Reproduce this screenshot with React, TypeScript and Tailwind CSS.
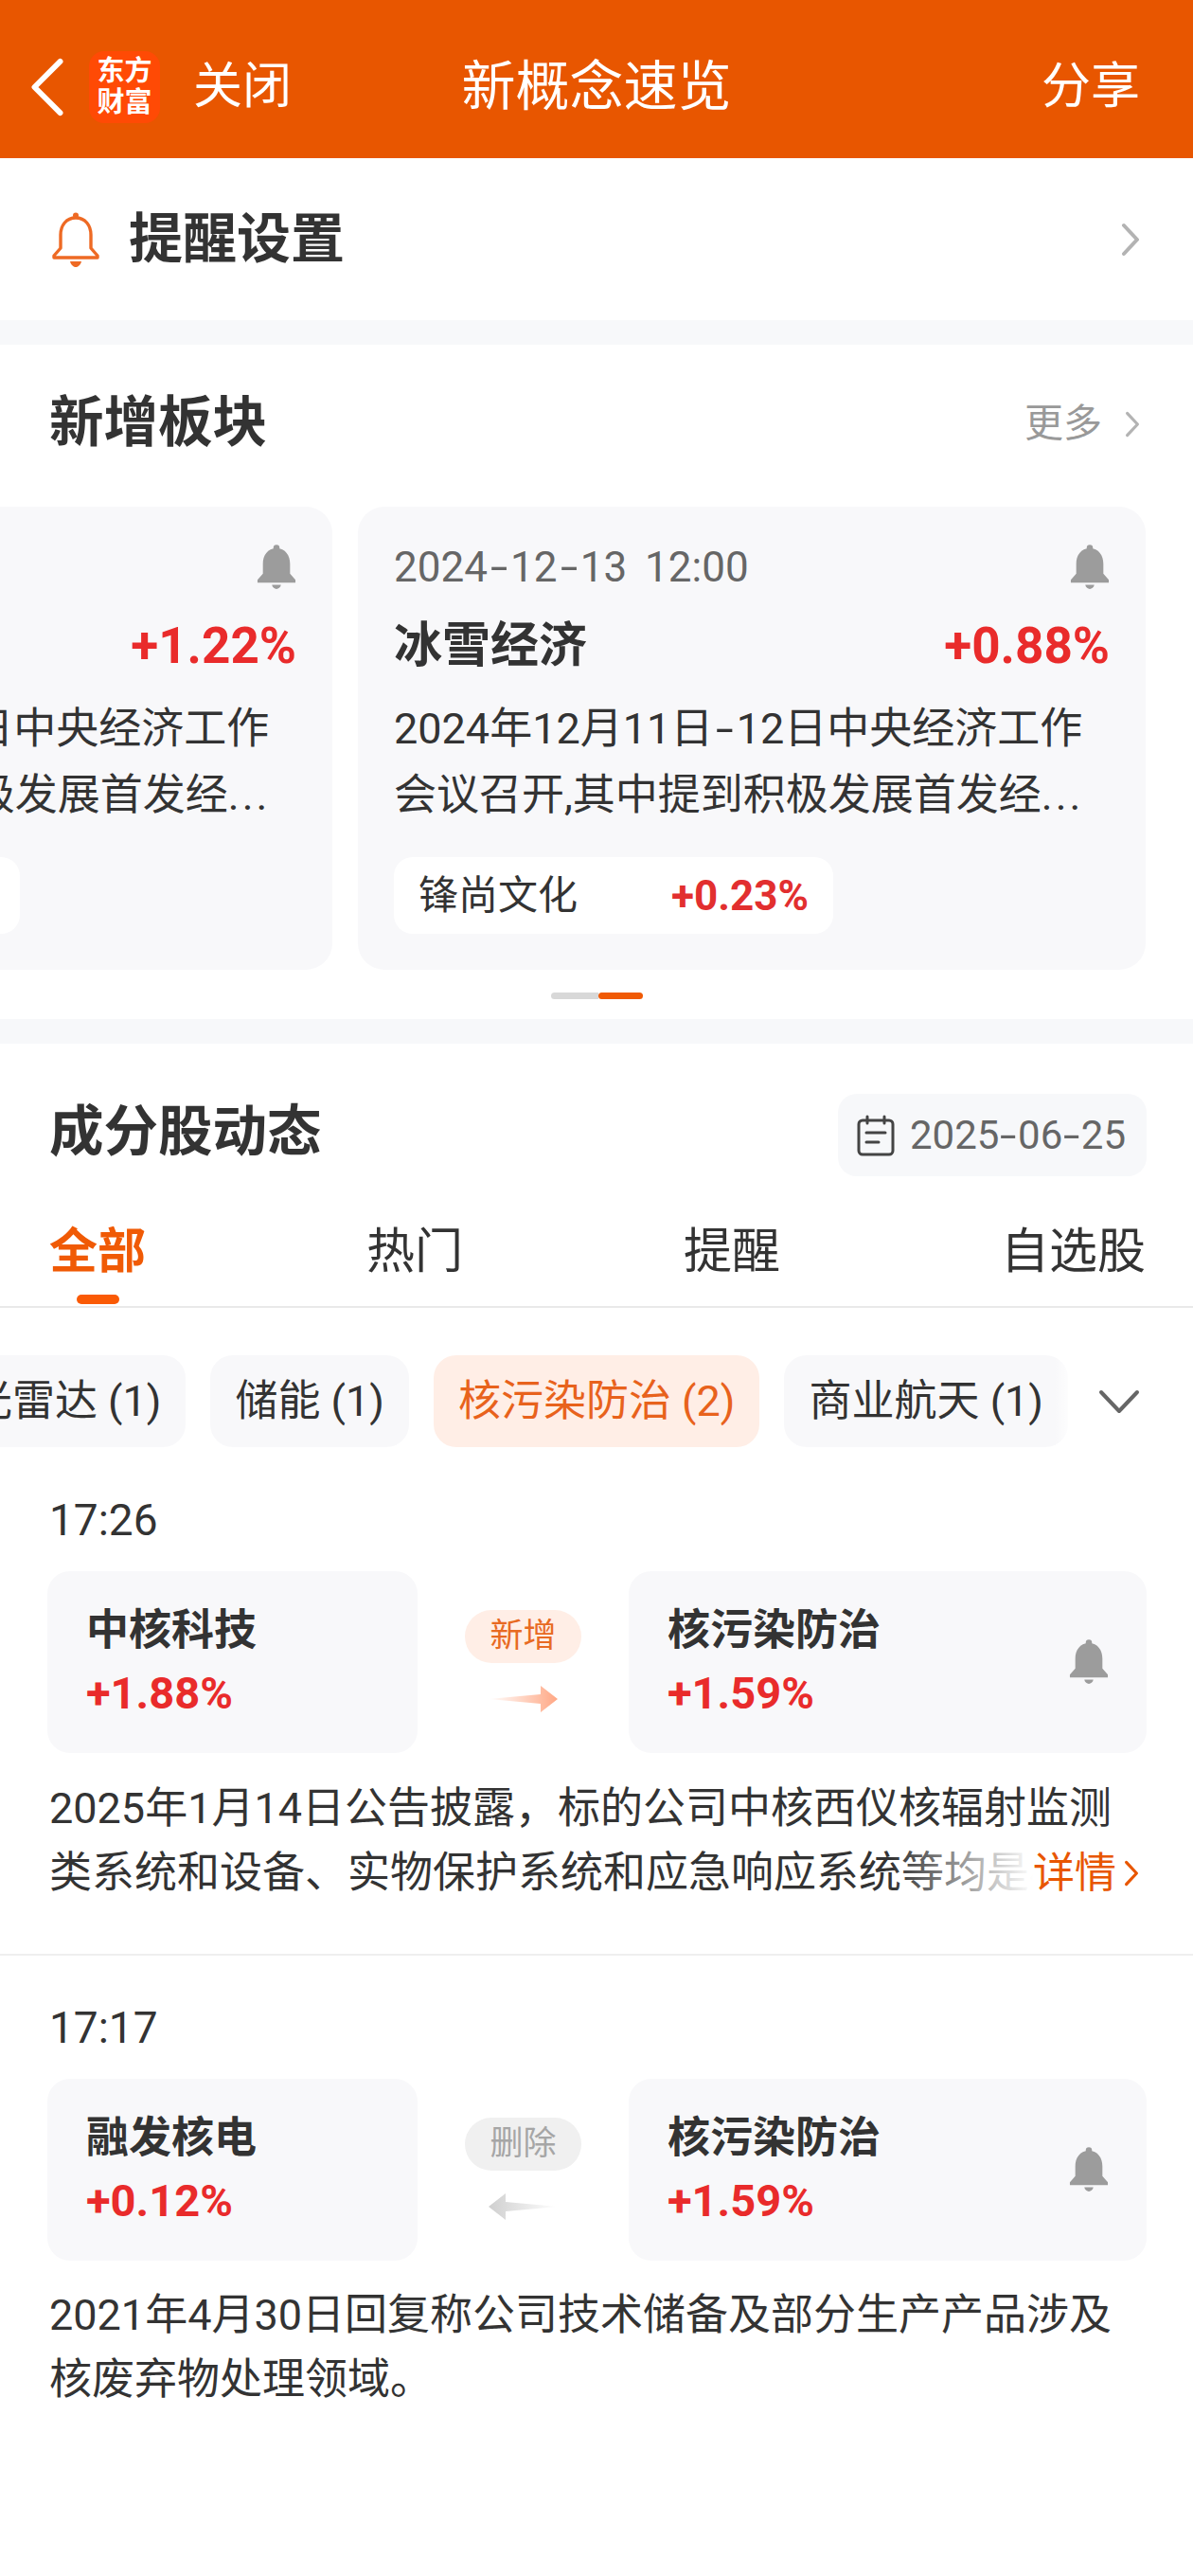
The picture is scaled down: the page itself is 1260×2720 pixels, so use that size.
import React from "react";

const ChevronRight: React.FC<{ className?: string; color?: string }> = ({ className, color = "#b3b3b3" }) => (
  <svg viewBox="0 0 20 36" className={className} fill="none" stroke={color} strokeWidth="4" strokeLinecap="round" strokeLinejoin="round">
    <path d="M3 3 L17 18 L3 33" />
  </svg>
);

const OutlineBell = () => (
  <svg viewBox="0 0 52 60" className="w-[52px] h-[60px]" fill="none" stroke="#ee6a24" strokeWidth="3.4" strokeLinejoin="round">
    <circle cx="26" cy="4.5" r="3" fill="#ee6a24" stroke="none" />
    <path d="M26 7 C16 7 10 15 10 25 V39 L3 47 V49 H49 V47 L42 39 V25 C42 15 36 7 26 7 Z" />
    <path d="M20 53 H32 C31 57 28 59 26 59 C24 59 21 57 20 53 Z" fill="#ee6a24" stroke="none" />
  </svg>
);

const FilledBell = () => (
  <svg viewBox="0 0 44 50" className="w-[42px] h-[48px]" fill="#9c9c9c">
    <circle cx="22" cy="3.6" r="3.4" />
    <path d="M22 4 C12 4 7 12 7 21 V32 L1 39 V42 H43 V39 L37 32 V21 C37 12 32 4 22 4 Z" />
    <path d="M17 44.5 H27 C26.4 47.6 24 49 22 49 C20 49 17.6 47.6 17 44.5 Z" />
  </svg>
);

const CalendarIcon = () => (
  <svg viewBox="0 0 40 44" className="w-[40px] h-[44px]" fill="none" stroke="#444" strokeWidth="3" strokeLinecap="round" strokeLinejoin="round">
    <rect x="2" y="6" width="36" height="36" rx="4" />
    <path d="M11 2 V9 M29 2 V9 M10 19 H30 M10 29 H23" />
  </svg>
);

const FlowArrow: React.FC<{ removed?: boolean }> = ({ removed }) => (
  <svg viewBox="0 0 73 30" className="w-[73px] h-[30px]">
    <defs>
      <linearGradient id="arrowAdd" x1="0" x2="1" y1="0" y2="0">
        <stop offset="0" stopColor="#ffa784" stopOpacity="0" />
        <stop offset="1" stopColor="#ffa784" />
      </linearGradient>
      <linearGradient id="arrowDel" x1="1" x2="0" y1="0" y2="0">
        <stop offset="0" stopColor="#cfcfcf" stopOpacity="0" />
        <stop offset="1" stopColor="#cfcfcf" />
      </linearGradient>
    </defs>
    {removed ? (
      <path d="M73 15 L18 10 V1 L0 15 L18 29 V20 Z" fill="url(#arrowDel)" />
    ) : (
      <path d="M0 15 L55 10 V1 L73 15 L55 29 V20 Z" fill="url(#arrowAdd)" />
    )}
  </svg>
);

// the hyphen is set wider than Roboto's in the screenshot
const Dash: React.FC<{ className?: string }> = ({ className = "px-[6px]" }) => (
  <span className={`inline-block scale-x-150 ${className}`}>-</span>
);

const BoardCard: React.FC<{ pct: string; stock?: { name: string; pct: string } }> = ({ pct, stock }) => (
  <div className="w-[832px] h-[489px] shrink-0 rounded-[28px] bg-[#f8f8fa] px-[38px] pt-[40px]">
    <div className="flex items-center justify-between h-[48px]">
      <span className="text-[44px] leading-[48px] text-[#666] [word-spacing:8px]">
        2024<Dash />12<Dash />13 12:00
      </span>
      <FilledBell />
    </div>
    <div className="flex items-center justify-between h-[60px] mt-[29px]">
      <span className="text-[51px] leading-[60px] font-bold text-[#333]">冰雪经济</span>
      <span className="text-[53px] leading-[60px] font-bold text-[#e92b2b]">{pct}</span>
    </div>
    <p className="mt-[23px] text-[45px] leading-[70px] text-[#333] whitespace-nowrap">
      2024年12月11日<Dash />12日中央经济工作
    </p>
    <p className="text-[45px] leading-[70px] text-[#333] whitespace-nowrap">
      会议召开,其中提到积极发展首发经<span className="tracking-[3px]">...</span>
    </p>
    <div className="mt-[30px] w-[464px] h-[81px] rounded-[20px] bg-white px-[26px] flex items-center justify-between">
      {stock && (
        <>
          <span className="text-[42px] text-[#333]">{stock.name}</span>
          <span className="text-[44px] font-bold text-[#e22f2f]">{stock.pct}</span>
        </>
      )}
    </div>
  </div>
);

const StockBox: React.FC<{ name: string; pct: string; className: string; bell?: boolean }> = ({ name, pct, className, bell }) => (
  <div className={`${className} h-[192px] rounded-[24px] bg-[#f8f8fa] pl-[41px] pr-[40px] flex items-center justify-between`}>
    <div>
      <div className="text-[45px] leading-[66px] font-bold text-[#333]">{name}</div>
      <div className="text-[47px] leading-[66px] font-bold text-[#e92b2b]">{pct}</div>
    </div>
    {bell && <FilledBell />}
  </div>
);

const ChangeRow: React.FC<{ name: string; pct: string; removed?: boolean }> = ({ name, pct, removed }) => (
  <div className="mt-[24px] ml-[50px] w-[1161px] flex">
    <StockBox name={name} pct={pct} className="w-[391px] shrink-0" />
    <div className="w-[223px] shrink-0 flex flex-col items-center pt-[41px]">
      <div className={`w-[123px] h-[56px] rounded-full flex items-center justify-center text-[35px] ${removed ? "bg-[#f0f0f0] text-[#a6a6a6]" : "bg-[#ffeee6] text-[#e86a22]"}`}>
        {removed ? "删除" : "新增"}
      </div>
      <div className="mt-[23px] flex">
        <FlowArrow removed={removed} />
      </div>
    </div>
    <StockBox name="核污染防治" pct="+1.59%" className="flex-1" bell />
  </div>
);

const chips = [
  { label: "激光雷达 (1)" },
  { label: "储能 (1)" },
  { label: "核污染防治 (2)", active: true },
  { label: "商业航天 (1)" },
];

export default function App() {
  return (
    <div className="w-[1260px] h-[2720px] bg-white overflow-hidden font-['Roboto','Noto_Sans_CJK_SC',sans-serif]">
      <header className="h-[167px] pt-[16px] bg-[#e85600] flex items-center text-white">
        <div className="w-[360px] shrink-0 flex items-center pl-[32px]">
          <svg viewBox="0 0 36 64" className="w-[36px] h-[62px]" fill="none" stroke="#fff" strokeWidth="6" strokeLinecap="round" strokeLinejoin="round">
            <path d="M32 4 L4 32 L32 60" />
          </svg>
          <div className="ml-[26px] w-[75px] h-[76px] rounded-[16px] bg-[#ff4a05] flex items-center justify-center text-[29px] leading-[33px] font-bold text-center">
            东方<br />财富
          </div>
          <span className="ml-[35px] text-[52px]">关闭</span>
        </div>
        <h1 className="flex-1 text-center text-[57px] leading-[70px] font-normal">新概念速览</h1>
        <div className="w-[360px] shrink-0 flex justify-end pr-[56px] text-[52px]">分享</div>
      </header>

      <section className="h-[171px] flex items-center justify-between pl-[54px] pr-[56px]">
        <div className="flex items-center gap-[30px]">
          <OutlineBell />
          <span className="text-[57px] font-bold text-[#333]">提醒设置</span>
        </div>
        <ChevronRight className="w-[20px] h-[36px]" />
      </section>

      <div className="h-[26px] bg-[#f7f8fa]" />

      <section className="h-[712px]">
        <div className="h-[171px] pb-[4px] flex items-center justify-between pl-[52px] pr-[56px]">
          <h2 className="text-[57.5px] font-bold text-[#333]">新增板块</h2>
          <div className="flex items-center gap-[24px]">
            <span className="text-[41px] text-[#999]">更多</span>
            <ChevronRight className="w-[16px] h-[28px]" />
          </div>
        </div>
        <div className="flex gap-[27px] ml-[-481px]">
          <BoardCard pct="+1.22%" />
          <BoardCard pct="+0.88%" stock={{ name: "锋尚文化", pct: "+0.23%" }} />
        </div>
        <div className="mt-[24px] flex justify-center">
          <div className="w-[50px] h-[7px] rounded-l-full bg-[#d8d8d8]" />
          <div className="w-[47px] h-[7px] rounded-full bg-[#f05a05]" />
        </div>
      </section>

      <div className="h-[26px] bg-[#f7f8fa]" />

      <section>
        <div className="mt-[53px] h-[87px] flex items-center justify-between pl-[52px] pr-[49px]">
          <h2 className="text-[57.5px] font-bold text-[#333] mt-[-4px]">成分股动态</h2>
          <div className="w-[326px] h-[87px] rounded-[20px] bg-[#f7f8fa] flex items-center pl-[20px] gap-[16px]">
            <CalendarIcon />
            <span className="text-[42px] text-[#666]">
              2025<Dash className="px-[4px]" />06<Dash className="px-[4px]" />25
            </span>
          </div>
        </div>

        <div className="h-[139px] pt-[50px] pl-[52px] pr-[50px] border-b-2 border-[#e9e9e9] flex justify-between items-start text-[51px] leading-[60px] text-[#333]">
          <div className="flex flex-col items-center">
            <span className="font-bold text-[#f05a05]">全部</span>
            <span className="mt-[15px] w-[45px] h-[10px] rounded-full bg-[#fa5a05]" />
          </div>
          <span>热门</span>
          <span>提醒</span>
          <span>自选股</span>
        </div>

        <div className="mt-[50px] flex items-center">
          <div className="relative w-[1128px] overflow-hidden flex justify-end gap-[26px]">
            {chips.map((c) => (
              <div
                key={c.label}
                className={`shrink-0 h-[97px] rounded-[24px] px-[26px] flex items-center text-[45px] whitespace-nowrap ${c.active ? "bg-[#ffeee6] text-[#e8621c]" : "bg-[#f8f8fa] text-[#333]"}`}
              >
                {c.label}
              </div>
            ))}
            <div className="absolute right-0 top-0 bottom-0 w-[14px] bg-linear-to-r from-transparent to-white/70" />
          </div>
          <svg viewBox="0 0 44 26" className="ml-[32px] w-[44px] h-[26px]" fill="none" stroke="#666" strokeWidth="4" strokeLinecap="round" strokeLinejoin="round">
            <path d="M3 3 L22 23 L41 3" />
          </svg>
        </div>

        <div className="pt-[47px] pb-[51px] border-b-2 border-[#efefef]">
          <div className="pl-[52px] text-[46px] leading-[60px] text-[#333]">17:26</div>
          <ChangeRow name="中核科技" pct="+1.88%" />
          <div className="mt-[25px] px-[52px] text-[45px] leading-[68px] text-[#333]">
            <p className="whitespace-nowrap">2025年1月14日公告披露，标的公司中核西仪核辐射监测</p>
            <div className="flex items-center">
              <div className="relative w-[1039px] overflow-hidden whitespace-nowrap">
                类系统和设备、实物保护系统和应急响应系统等均是标
                <div className="absolute right-0 top-0 bottom-0 w-[150px] bg-linear-to-r from-transparent to-white" />
              </div>
              <span className="text-[44px] text-[#e85600]">详情</span>
              <ChevronRight className="ml-[8px] w-[16px] h-[28px]" color="#e85600" />
            </div>
          </div>
        </div>

        <div className="pt-[46px]">
          <div className="pl-[52px] text-[46px] leading-[60px] text-[#333]">17:17</div>
          <ChangeRow name="融发核电" pct="+0.12%" removed />
          <div className="mt-[24px] px-[52px] text-[45px] leading-[68px] text-[#333]">
            <p className="whitespace-nowrap">2021年4月30日回复称公司技术储备及部分生产产品涉及</p>
            <p>核废弃物处理领域。</p>
          </div>
        </div>
      </section>
    </div>
  );
}
